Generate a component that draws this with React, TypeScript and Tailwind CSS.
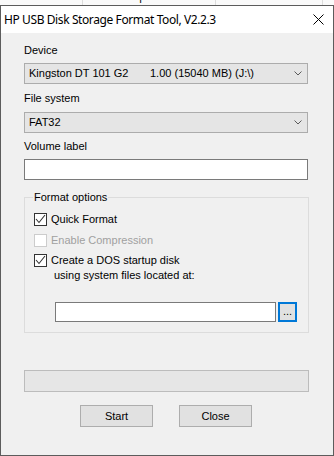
import React from "react";

const body = { fontFamily: '"Liberation Sans", Arial, sans-serif' } as const;

function Chevron() {
  return (
    <svg width="8" height="5" viewBox="0 0 8 5" className="block">
      <polyline points="0.5,0.5 4,4 7.5,0.5" fill="none" stroke="#5a5a5a" strokeWidth="1" />
    </svg>
  );
}

function Combo({ children }: { children: React.ReactNode }) {
  return (
    <div className="h-[21px] w-[284px] border border-[#acacac] bg-[#e5e5e5] flex items-center pl-[4px] pr-[5px] text-[11px] text-black">
      <div className="flex-1 flex items-center leading-[13px]">{children}</div>
      <Chevron />
    </div>
  );
}

function Check({ checked, disabled, label }: { checked: boolean; disabled?: boolean; label: string }) {
  return (
    <div className="flex items-center h-[13px]">
      <div
        className={
          "w-[13px] h-[13px] border bg-white flex items-center justify-center " +
          (disabled ? "border-[#cccccc]" : "border-[#333333]")
        }
      >
        {checked && (
          <svg width="11" height="11" viewBox="0 0 11 11" className="block">
            <polyline points="1,5 4,8.5 10,1" fill="none" stroke="#333333" strokeWidth="1.1" />
          </svg>
        )}
      </div>
      <span className={"ml-[4px] text-[11px] leading-[13px] " + (disabled ? "text-[#a0a0a0]" : "text-black")}>
        {label}
      </span>
    </div>
  );
}

export default function App() {
  return (
    <div className="w-[334px] h-[456px] bg-white overflow-hidden flex flex-col">
      {/* background app header strip (partly hidden behind the dialog) */}
      <div
        className="h-[5px] flex overflow-hidden bg-[#fafafa] text-[12px] text-[#222]"
        style={{ fontFamily: '"Noto Sans", sans-serif' }}
      >
        <div className="w-[83px] h-[5px] overflow-hidden border-r border-[#dddddd]">
          <div className="-mt-[12px] leading-[16px] pl-[1px]">Item</div>
        </div>
        <div className="w-[133px] h-[5px] overflow-hidden border-r border-[#dddddd] flex justify-center">
          <div className="-mt-[12px] leading-[16px] -ml-[8px]">Open</div>
        </div>
        <div className="w-[107px] h-[5px] overflow-hidden border-r border-[#dddddd] flex justify-center">
          <div className="-mt-[12px] leading-[16px] -ml-[2px]">Select</div>
        </div>
        <div className="flex-1" />
      </div>

      {/* window */}
      <div className="flex-1 flex flex-col border border-[#5c5c5c]">
        <div className="h-[27px] bg-white flex items-center justify-between pl-[3px] pr-[9px]">
          <span className="text-[12px] text-black leading-[16px] tracking-[-0.4px]" style={{ fontFamily: '"Noto Sans", sans-serif' }}>
            HP USB Disk Storage Format Tool, V2.2.3
          </span>
          <svg width="11" height="11" viewBox="0 0 11 11" className="block">
            <line x1="0.5" y1="0.5" x2="10.5" y2="10.5" stroke="#000" strokeWidth="1" />
            <line x1="10.5" y1="0.5" x2="0.5" y2="10.5" stroke="#000" strokeWidth="1" />
          </svg>
        </div>

        <div className="flex-1 bg-[#f0f0f0] pl-[23px] pt-[11px] flex flex-col" style={body}>
          <div className="text-[11px] leading-[13px] text-black">Device</div>
          <div className="mt-[6px]">
            <Combo>
              <span className="w-[121px]">Kingston DT 101 G2</span>
              <span>1.00 (15040 MB) (J:\)</span>
            </Combo>
          </div>

          <div className="mt-[8px] text-[11px] leading-[13px] text-black">File system</div>
          <div className="mt-[7px]">
            <Combo>
              <span>FAT32</span>
            </Combo>
          </div>

          <div className="mt-[7px] text-[11px] leading-[13px] text-black">Volume label</div>
          <div className="mt-[6px] w-[284px] h-[21px] border border-[#7a7a7a] bg-white" />

          <div className="mt-[17px] w-[285px] border border-[#dcdcdc] relative pl-[9px] pt-[15px] pb-[10px]">
            <span className="absolute -top-[7px] left-[8px] px-[1px] bg-[#f0f0f0] text-[11px] leading-[13px] text-black">
              Format options
            </span>
            <div className="h-[21px]">
              <Check checked label="Quick Format" />
            </div>
            <div className="h-[20px]">
              <Check checked={false} disabled label="Enable Compression" />
            </div>
            <Check checked label="Create a DOS startup disk" />
            <div className="ml-[20px] mt-[2px] text-[11px] leading-[13px] text-black">using system files located at:</div>
            <div className="mt-[20px] ml-[21px] flex">
              <div className="w-[221px] h-[20px] border border-[#7a7a7a] bg-white" />
              <div className="ml-[2px] w-[19px] h-[20px] border-2 border-[#0078d7] bg-[#e1e1e1] flex items-center justify-center text-[11px] leading-[11px] text-black pb-[2px]">
                ...
              </div>
            </div>
          </div>

          <div className="mt-[37px] w-[285px] h-[22px] border border-[#bcbcbc] bg-[#e6e6e6]" />

          <div className="mt-[13px] ml-[56px] flex gap-[26px]">
            <div className="w-[73px] h-[22px] border border-[#adadad] bg-[#e1e1e1] flex items-center justify-center text-[11px] text-black">
              Start
            </div>
            <div className="w-[73px] h-[22px] border border-[#adadad] bg-[#e1e1e1] flex items-center justify-center text-[11px] text-black">
              Close
            </div>
          </div>
        </div>
      </div>
    </div>
  );
}
